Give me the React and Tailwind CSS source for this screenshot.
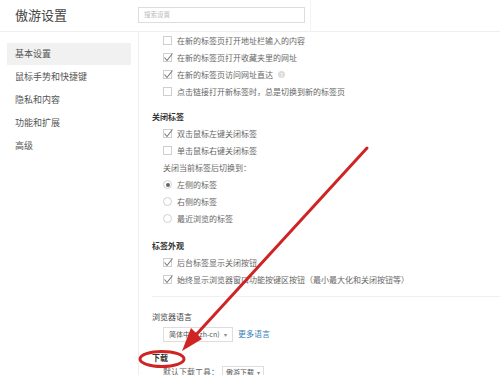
import React from "react";

const font = { fontFamily: '"Noto Sans CJK SC", "Noto Sans", sans-serif' };

function Box({ checked }) {
  return (
    <span className="relative w-[9px] h-[9px] border border-[#cfcfcf] bg-white shrink-0">
      {checked && (
        <svg className="absolute left-[-1px] top-[-2px]" width="11" height="11" viewBox="0 0 11 11">
          <path d="M1.5 5.5 L4 8.5 L9.5 1.5" fill="none" stroke="#777" strokeWidth="1.1" />
        </svg>
      )}
    </span>
  );
}

function Radio({ on }) {
  return (
    <span className="w-[9px] h-[9px] rounded-full border border-[#d0d0d0] bg-white shrink-0 flex items-center justify-center">
      {on && <span className="w-[4px] h-[4px] rounded-full bg-[#666]" />}
    </span>
  );
}

function Row({ children, checked, radio, on }) {
  return (
    <div className="h-[17px] flex items-center pl-[24px] gap-[5px] text-[8px] text-[#666]">
      {radio ? <Radio on={on} /> : <Box checked={checked} />}
      <span className="whitespace-nowrap">{children}</span>
    </div>
  );
}

function Heading({ children, className = "" }) {
  return (
    <div className={"h-[17px] flex items-center pl-[13px] text-[8px] font-bold text-[#333] " + className}>
      {children}
    </div>
  );
}

export default function App() {
  const side = ["基本设置", "鼠标手势和快捷键", "隐私和内容", "功能和扩展", "高级"];
  return (
    <div className="relative w-[500px] h-[375px] overflow-hidden bg-white" style={font}>
      <div className="h-[32px] border-b border-[#eeeeee] flex items-center">
        <div className="w-[138px] pl-[15px] text-[13px] text-[#444] pb-[2px]">傲游设置</div>
        <div className="w-[167px] h-[16px] border border-[#dddddd] flex items-center pl-[5px] text-[6.5px] text-[#bbb] mb-[1px]">
          搜索设置
        </div>
        <div className="ml-[5px] h-[32px] border-l border-[#f3f3f3]" />
      </div>
      <div className="flex">
        <div className="w-[139px] h-[343px] border-r border-[#eeeeee] pt-[11px] px-[7px]">
          {side.map((s, i) => (
            <div
              key={s}
              className={
                "h-[22px] mb-[1px] flex items-center pl-[8px] text-[9px] text-[#555] " +
                (i === 0 ? "bg-[#f1f1f1]" : "")
              }
            >
              {s}
            </div>
          ))}
        </div>
        <div className="flex-1">
          <Row>在新的标签页打开地址栏输入的内容</Row>
          <Row checked>在新的标签页打开收藏夹里的网址</Row>
          <div className="h-[17px] flex items-center pl-[24px] gap-[5px] text-[8px] text-[#666]">
            <Box checked />
            <span className="whitespace-nowrap">在新的标签页访问网址直达</span>
            <span className="w-[7px] h-[7px] rounded-full bg-[#dcdcdc] text-white text-[5px] leading-none flex items-center justify-center">?</span>
          </div>
          <Row>点击链接打开新标签时，总是切换到新的标签页</Row>

          <Heading className="mt-[8px]">关闭标签</Heading>
          <Row checked>双击鼠标左键关闭标签</Row>
          <Row>单击鼠标右键关闭标签</Row>
          <div className="h-[17px] flex items-center pl-[24px] text-[8px] text-[#666]">关闭当前标签后切换到：</div>
          <Row radio on>左侧的标签</Row>
          <Row radio>右侧的标签</Row>
          <Row radio>最近浏览的标签</Row>

          <Heading className="mt-[10px]">标签外观</Heading>
          <Row checked>后台标签显示关闭按钮</Row>
          <Row checked>始终显示浏览器窗口功能按键区按钮（最小最大化和关闭按钮等）</Row>

          <div className="mt-[8px] ml-[13px] border-t border-[#f0f0f0]" />
          <Heading className="mt-[11px] font-normal text-[#444]">浏览器语言</Heading>
          <div className="h-[18px] flex items-center pl-[24px] gap-[5px]">
            <div className="w-[70px] h-[15px] border border-[#dddddd] flex items-center justify-between px-[5px] text-[7px] text-[#555]">
              <span>简体中文(zh-cn)</span>
              <span className="text-[6px] text-[#888]">▾</span>
            </div>
            <span className="text-[8px] text-[#3a7fb8]">更多语言</span>
          </div>
          <Heading className="mt-[6px]">下载</Heading>
          <div className="h-[12px] flex items-start pl-[24px] gap-[3px] text-[8px] leading-[12px] text-[#666]">
            <span>默认下载工具：</span>
            <div className="w-[42px] h-[14px] border border-[#dddddd] flex items-start justify-between px-[3px] text-[7px] leading-[11px] text-[#555]">
              <span>傲游下载</span>
              <span className="text-[6px] text-[#888]">▾</span>
            </div>
          </div>
        </div>
      </div>

      <svg className="absolute left-0 top-0 pointer-events-none" width="500" height="375" viewBox="0 0 500 375">
        <line x1="367" y1="148" x2="194" y2="337" stroke="#d02424" strokeWidth="3" strokeLinecap="round" />
        <polygon points="182,351 202,339 191,328" fill="#d02424" />
        <ellipse cx="162" cy="359" rx="22" ry="7.5" fill="none" stroke="#d02424" strokeWidth="3" />
      </svg>
    </div>
  );
}
